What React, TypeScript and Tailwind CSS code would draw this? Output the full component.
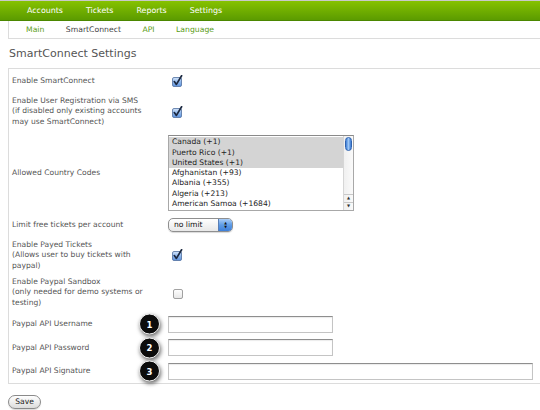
import React from "react";

const Checked = () => (
  <svg width="12" height="12" viewBox="0 0 12 12" className="block">
    <defs>
      <linearGradient id="cbg" x1="0" y1="0" x2="0" y2="1">
        <stop offset="0" stopColor="#d6e6fa" />
        <stop offset="0.5" stopColor="#8db6ec" />
        <stop offset="1" stopColor="#5f93dc" />
      </linearGradient>
    </defs>
    <rect x="0.5" y="2.5" width="9" height="9" rx="1.5" fill="url(#cbg)" stroke="#4f6f9e" strokeWidth="0.8" />
    <path d="M2.3 6.6 L4.4 9.4 L9.6 0.8" fill="none" stroke="#1b2840" strokeWidth="1.7" strokeLinecap="round" strokeLinejoin="round" />
  </svg>
);

const Unchecked = () => (
  <svg width="12" height="12" viewBox="0 0 12 12" className="block">
    <defs>
      <linearGradient id="ucg" x1="0" y1="0" x2="0" y2="1">
        <stop offset="0" stopColor="#ffffff" />
        <stop offset="1" stopColor="#e6e6e6" />
      </linearGradient>
    </defs>
    <rect x="0.5" y="2.5" width="9" height="9" rx="1.5" fill="url(#ucg)" stroke="#8a8a8a" strokeWidth="0.8" />
  </svg>
);

const Badge = ({ n }: { n: string }) => (
  <div className="absolute left-[127px] top-1/2 -translate-y-1/2 w-[21px] h-[21px] rounded-full bg-[#0c0c0c] border-[1.5px] border-[#f0f0f0] shadow-[1px_2px_4px_rgba(0,0,0,0.6)] flex items-center justify-center text-white text-[8.5px] font-bold leading-none">
    {n}
  </div>
);

const Label = ({ children }: { children: React.ReactNode }) => (
  <div className="w-[156px] shrink-0 text-[#555] text-[7.6px] leading-[10.4px]">{children}</div>
);

const TextInput = ({ w }: { w: string }) => (
  <div className={`${w} h-[17px] bg-white border border-[#c4c4c4] border-t-[#8e8e8e] shadow-[inset_0_1px_1px_rgba(0,0,0,0.08)]`} />
);

const countries = [
  { name: "Canada (+1)", sel: true },
  { name: "Puerto Rico (+1)", sel: true },
  { name: "United States (+1)", sel: true },
  { name: "Afghanistan (+93)", sel: false },
  { name: "Albania (+355)", sel: false },
  { name: "Algeria (+213)", sel: false },
  { name: "American Samoa (+1684)", sel: false },
];

export default function App() {
  return (
    <div className="w-[540px] h-[410px] bg-white overflow-hidden font-['DejaVu_Sans',sans-serif]">
      {/* top green bar */}
      <div className="h-[21px] border-t border-t-[#c9c9c9] border-b border-b-[#4b8700] bg-linear-to-b from-[#86c200] to-[#5b9b00] flex items-center pl-[27px] gap-[23px] text-white text-[7.9px] leading-none">
        <span>Accounts</span>
        <span>Tickets</span>
        <span>Reports</span>
        <span>Settings</span>
      </div>

      {/* sub nav */}
      <div className="ml-[8px] h-[18px] border-l border-b border-[#dcdcdc] flex items-center pl-[17px] gap-[21.5px] text-[7.7px] leading-none">
        <span className="text-[#5a9c16]">Main</span>
        <span className="text-[#444]">SmartConnect</span>
        <span className="text-[#5a9c16]">API</span>
        <span className="text-[#5a9c16]">Language</span>
      </div>

      {/* title */}
      <div className="h-[29px] flex items-center pl-[9px] text-[11px] text-[#555] leading-none">
        SmartConnect Settings
      </div>

      {/* panel */}
      <div className="ml-[8px] border-t border-l border-b border-[#dcdcdc] pl-[3px] pb-[3px] flex flex-col">
        <div className="mt-[6px] flex items-center">
          <Label>Enable SmartConnect</Label>
          <div className="ml-[4px]"><Checked /></div>
        </div>

        <div className="mt-[9px] flex items-center">
          <Label>
            Enable User Registration via SMS
            <br />
            (if disabled only existing accounts
            <br />
            may use SmartConnect)
          </Label>
          <div className="ml-[4px]"><Checked /></div>
        </div>

        <div className="mt-[7.5px] flex items-center">
          <Label>Allowed Country Codes</Label>
          <div className="w-[186px] h-[76px] border border-[#a8a8a8] border-t-[#8a8a8a] bg-white flex">
            <div className="flex-1 pt-[1.5px] text-[7.6px] leading-[10.3px] text-[#222]">
              {countries.map((c) => (
                <div key={c.name} className={`pl-[3px] ${c.sel ? "bg-[#d4d4d4]" : ""}`}>
                  {c.name}
                </div>
              ))}
            </div>
            <div className="w-[10px] border-l border-[#d6d6d6] bg-linear-to-r from-[#f0f0f0] to-[#fafafa] flex flex-col items-center">
              <div className="mt-[1px] w-[7px] h-[14px] rounded-full bg-linear-to-r from-[#3f7fd6] via-[#9cc6f5] to-[#3a78cf] border border-[#2f63b0]" />
              <div className="flex-1" />
              <div className="w-full h-[8px] border-t border-[#c8c8c8] flex items-center justify-center text-[4px] text-[#333] leading-none">▲</div>
              <div className="w-full h-[8px] border-t border-[#c8c8c8] flex items-center justify-center text-[4px] text-[#333] leading-none">▼</div>
            </div>
          </div>
        </div>

        <div className="mt-[7px] flex items-center">
          <Label>Limit free tickets per account</Label>
          <div className="w-[65px] h-[14px] rounded-[5px] border border-[#8f8f8f] bg-linear-to-b from-white to-[#e8e8e8] flex overflow-hidden shadow-[0_1px_1px_rgba(0,0,0,0.15)]">
            <div className="flex-1 pl-[5px] flex items-center text-[7.6px] text-[#111] leading-none">no limit</div>
            <div className="w-[14px] bg-linear-to-b from-[#a9cdf6] via-[#5d9be6] to-[#3d7fd9] border-l border-[#5b7fb5] flex flex-col items-center justify-center text-[3.5px] leading-[4px] text-[#111]">
              <span>▲</span>
              <span>▼</span>
            </div>
          </div>
        </div>

        <div className="mt-[8px] flex items-center">
          <Label>
            Enable Payed Tickets
            <br />
            (Allows user to buy tickets with
            <br />
            paypal)
          </Label>
          <div className="ml-[4px]"><Checked /></div>
        </div>

        <div className="mt-[6px] flex items-center">
          <Label>
            Enable Paypal Sandbox
            <br />
            (only needed for demo systems or
            <br />
            testing)
          </Label>
          <div className="ml-[5px]"><Unchecked /></div>
        </div>

        <div className="mt-[7.6px] flex items-center relative">
          <Label>Paypal API Username</Label>
          <Badge n="1" />
          <TextInput w="w-[165px]" />
        </div>

        <div className="mt-[6.5px] flex items-center relative">
          <Label>Paypal API Password</Label>
          <Badge n="2" />
          <TextInput w="w-[165px]" />
        </div>

        <div className="mt-[6.5px] flex items-center relative">
          <Label>Paypal API Signature</Label>
          <Badge n="3" />
          <TextInput w="w-[365px]" />
        </div>
      </div>

      {/* save */}
      <div className="mt-[11px] ml-[8px]">
        <button className="w-[33px] h-[14px] rounded-full border border-[#8a8a8a] bg-linear-to-b from-white to-[#dcdcdc] text-[7.6px] text-[#222] leading-none flex items-center justify-center shadow-[0_1px_1px_rgba(0,0,0,0.15)]">
          Save
        </button>
      </div>
    </div>
  );
}
